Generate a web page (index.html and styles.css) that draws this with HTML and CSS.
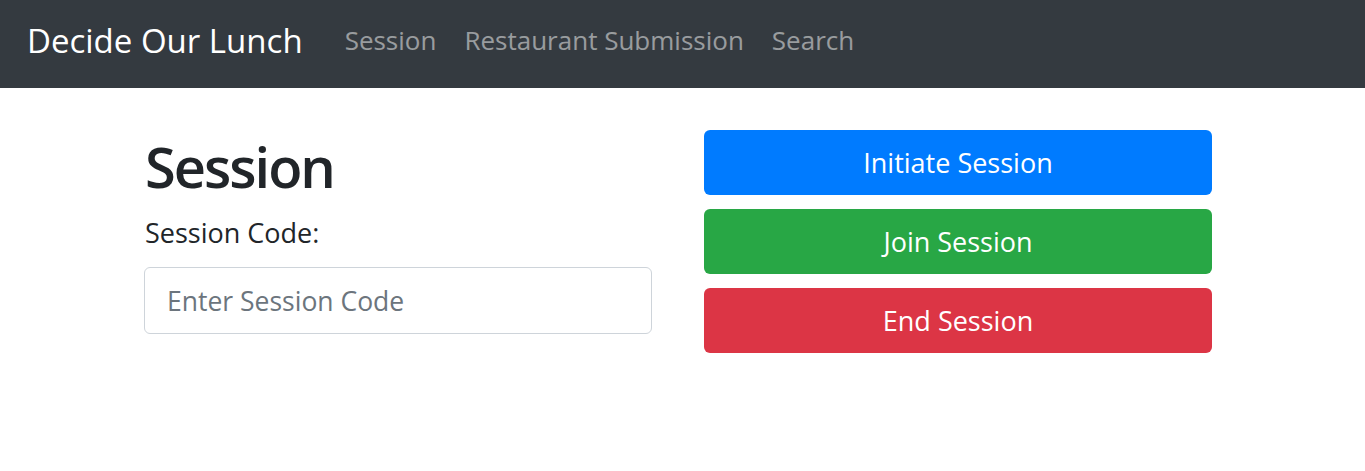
FILE: index.html
```html
<!DOCTYPE html>
<html lang="en">
<head>
<meta charset="utf-8">
<title>Decide Our Lunch</title>
<link rel="stylesheet" href="styles.css">
</head>
<body>
<nav class="navbar">
  <a class="brand" href="#">Decide Our Lunch</a>
  <ul class="nav-links">
    <li><a href="#">Session</a></li>
    <li><a href="#">Restaurant Submission</a></li>
    <li><a href="#">Search</a></li>
  </ul>
</nav>
<main class="content">
  <section class="session-form">
    <h1 class="title">Session</h1>
    <label class="label" for="code">Session Code:</label>
    <input class="input" id="code" type="text" placeholder="Enter Session Code">
  </section>
  <section class="actions">
    <button class="btn btn-primary">Initiate Session</button>
    <button class="btn btn-success">Join Session</button>
    <button class="btn btn-danger">End Session</button>
  </section>
</main>
</body>
</html>
```

FILE: styles.css
```css
* { box-sizing: border-box; }
body {
  margin: 0;
  font-family: "Open Sans", "Noto Sans", sans-serif;
  color: #212529;
  background: #fff;
}
.navbar {
  height: 88px;
  background: #343a40;
  display: flex;
  align-items: center;
  padding: 0 27px 8px;
}
.brand {
  color: #fff;
  text-decoration: none;
  font-size: 33px;
  margin-right: 28px;
}
.nav-links {
  list-style: none;
  margin: 0;
  padding: 0;
  display: flex;
}
.nav-links a {
  display: block;
  color: rgba(255,255,255,0.5);
  text-decoration: none;
  font-size: 26px;
  padding: 0 14px;
}
.content {
  display: grid;
  grid-template-columns: 508px 508px;
  column-gap: 52px;
  padding: 42px 0 0 144px;
}
.session-form {
  display: flex;
  flex-direction: column;
  align-items: flex-start;
}
.title {
  font-size: 56px;
  font-weight: 600;
  line-height: 1.2;
  letter-spacing: -2px;
  margin: 3px 0 14px 1px;
}
.label {
  font-size: 27px;
  margin: 0 0 16px 1px;
}
.input {
  width: 508px;
  height: 67px;
  border: 1px solid #ced4da;
  border-radius: 6px;
  padding: 0 22px;
  font-family: inherit;
  font-size: 26.5px;
  color: #495057;
}
.input::placeholder { color: #6c757d; }
.actions {
  display: flex;
  flex-direction: column;
  gap: 14px;
}
.btn {
  height: 65px;
  border: none;
  border-radius: 6px;
  color: #fff;
  font-family: inherit;
  font-size: 27px;
}
.btn-primary { background: #007bff; }
.btn-success { background: #28a745; }
.btn-danger { background: #dc3545; }
```
